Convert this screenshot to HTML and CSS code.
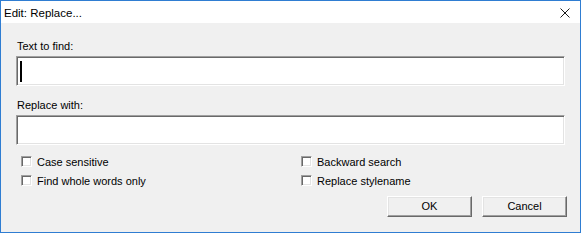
FILE: index.html
```html
<!DOCTYPE html>
<html>
<head>
<meta charset="utf-8">
<link rel="stylesheet" href="styles.css">
</head>
<body>
<div class="window">
  <div class="titlebar">
    <span class="title">Edit: Replace...</span>
    <svg class="close" width="10" height="10" viewBox="0 0 10 10"><path d="M0.5 0.5 L9.5 9.5 M9.5 0.5 L0.5 9.5" stroke="#1a1a1a" stroke-width="1" fill="none"/></svg>
  </div>
  <div class="content">
    <div class="label">Text to find:</div>
    <div class="field"><span class="caret"></span></div>
    <div class="label second">Replace with:</div>
    <div class="field"></div>
    <div class="options">
      <label class="opt"><span class="box"></span>Case sensitive</label>
      <label class="opt"><span class="box"></span>Backward search</label>
      <label class="opt"><span class="box"></span>Find whole words only</label>
      <label class="opt"><span class="box"></span>Replace stylename</label>
    </div>
    <div class="buttons">
      <div class="btn">OK</div>
      <div class="btn">Cancel</div>
    </div>
  </div>
</div>
</body>
</html>
```
FILE: styles.css
```css
html, body {
  margin: 0;
  padding: 0;
  background: #ffffff;
}
.window {
  box-sizing: border-box;
  width: 581px;
  height: 233px;
  border: 1px solid #2f7dd2;
  display: flex;
  flex-direction: column;
  font-family: "Liberation Sans", Arial, sans-serif;
  font-size: 11px;
  color: #000;
}
.titlebar {
  height: 22px;
  background: #ffffff;
  display: flex;
  align-items: center;
  justify-content: space-between;
  padding: 0 10px 0 3px;
  flex: none;
}
.title {
  font-size: 11.5px;
  padding-top: 1px;
}
.close {
  display: block;
  margin-top: 1px;
}
.content {
  flex: 1;
  background: #f0f0f0;
  padding: 17px 15px 0 15px;
  display: flex;
  flex-direction: column;
}
.label {
  line-height: 13px;
  height: 13px;
  margin-bottom: 3px;
  padding-left: 1px;
}
.label.second {
  margin-top: 13px;
}
.field {
  box-sizing: border-box;
  height: 30px;
  background: #ffffff;
  border-top: 1px solid #a0a0a0;
  border-left: 1px solid #a0a0a0;
  border-right: 1px solid #ffffff;
  border-bottom: 1px solid #ffffff;
  box-shadow: inset 1px 1px 0 #696969, inset -1px -1px 0 #e3e3e3;
  display: flex;
  align-items: center;
  padding-left: 3px;
}
.caret {
  display: block;
  width: 2px;
  height: 21px;
  background: #000;
}
.options {
  margin-top: 7px;
  display: grid;
  grid-template-columns: 280px 1fr;
  grid-auto-rows: 19px;
}
.opt {
  display: flex;
  align-items: center;
  padding-left: 5px;
}
.box {
  box-sizing: border-box;
  width: 11px;
  height: 11px;
  background: #ffffff;
  border-top: 1px solid #a0a0a0;
  border-left: 1px solid #a0a0a0;
  border-right: 1px solid #ffffff;
  border-bottom: 1px solid #ffffff;
  box-shadow: inset 1px 1px 0 #696969, inset -1px -1px 0 #e3e3e3;
  margin-right: 5px;
  flex: none;
}
.buttons {
  margin-top: 6px;
  margin-right: -2px;
  display: flex;
  justify-content: flex-end;
  gap: 10px;
}
.btn {
  box-sizing: border-box;
  width: 85px;
  height: 21px;
  background: #f0f0f0;
  border-top: 1px solid #ffffff;
  border-left: 1px solid #ffffff;
  border-right: 1px solid #696969;
  border-bottom: 1px solid #696969;
  box-shadow: inset -1px -1px 0 #a0a0a0, inset 1px 1px 0 #e3e3e3;
  display: flex;
  align-items: center;
  justify-content: center;
  line-height: 13px;
}
```
